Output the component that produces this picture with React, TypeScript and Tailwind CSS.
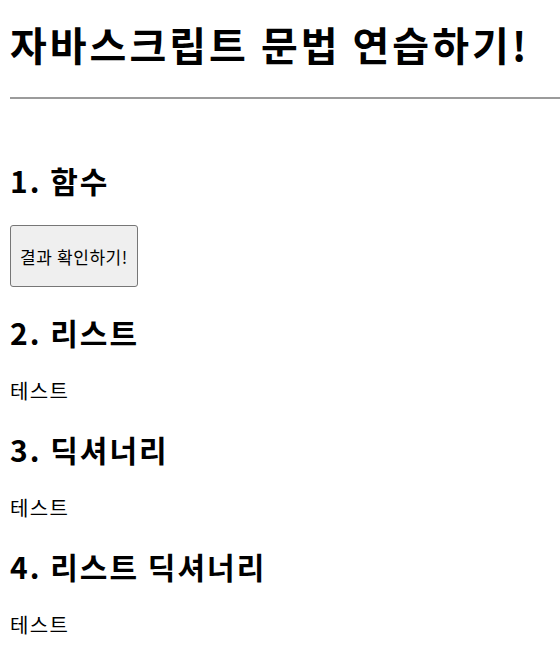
export default function App() {
  const font = "font-['Malgun_Gothic','Noto_Sans_CJK_KR',sans-serif]";
  const h2 = "text-[30px] font-bold leading-[40px] mt-[25px] mb-[25px] tracking-[2px]";
  const p = "text-[20px] leading-[27px] tracking-[1.3px]";
  return (
    <div className={`${font} px-[10px] text-black bg-white min-h-[655px] overflow-hidden`}>
      <h1 className="text-[40px] font-bold leading-[53px] pt-[18px] mb-[26px] tracking-[3px] whitespace-nowrap">
        자바스크립트 문법 연습하기!
      </h1>
      <hr className="-mr-[10px] border-0 border-t-[2px] border-[#9b9b9b]" />

      <h2 className={`${h2} mt-[61px]`}>1. 함수</h2>
      <button className="w-[128px] h-[62px] bg-[#efefef] border border-[#767676] rounded-[3px] text-[17px] leading-none tracking-[0.6px] whitespace-nowrap">
        결과 확인하기!
      </button>

      <h2 className={h2}>2. 리스트</h2>
      <p className={p}>테스트</p>

      <h2 className={h2}>3. 딕셔너리</h2>
      <p className={p}>테스트</p>

      <h2 className={h2}>4. 리스트 딕셔너리</h2>
      <p className={p}>테스트</p>
    </div>
  );
}
